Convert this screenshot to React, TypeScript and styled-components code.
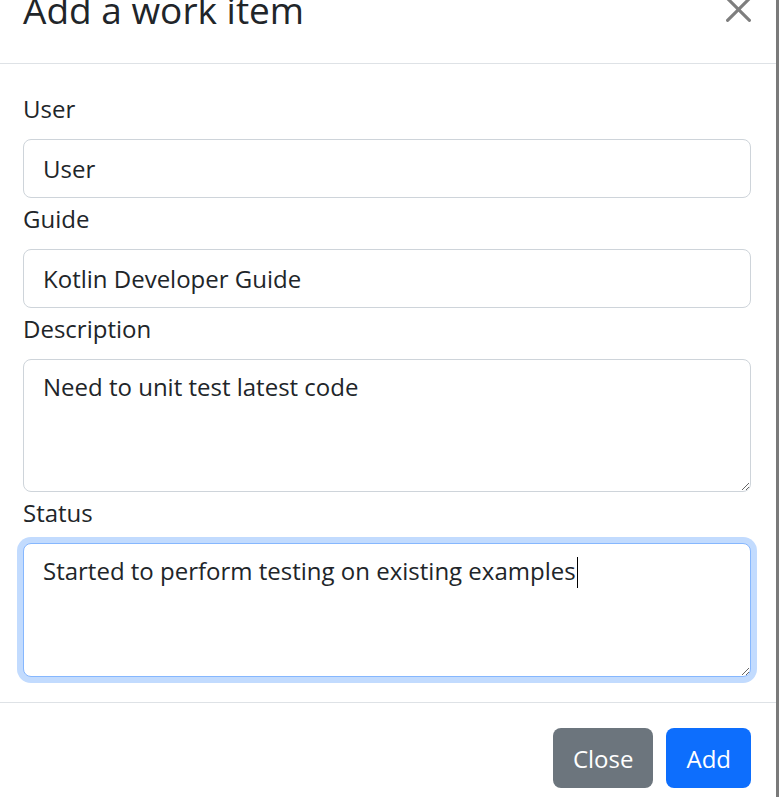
import styled, { createGlobalStyle } from 'styled-components';

const GlobalStyle = createGlobalStyle`
  html, body {
    margin: 0;
    height: 100%;
    overflow: hidden;
    background: #7a7a7a;
  }
  body {
    font-family: 'Open Sans', 'Noto Sans', sans-serif;
    color: #212529;
  }
`;

const CloseIcon = () => (
  <svg width="25" height="25" viewBox="0 0 16 16" aria-hidden="true">
    <path
      fill="currentColor"
      d="M.293.293a1 1 0 0 1 1.414 0L8 6.586 14.293.293a1 1 0 1 1 1.414 1.414L9.414 8l6.293 6.293a1 1 0 0 1-1.414 1.414L8 9.414l-6.293 6.293a1 1 0 0 1-1.414-1.414L6.586 8 .293 1.707a1 1 0 0 1 0-1.414z"
    />
  </svg>
);

export default function App() {
  return (
    <>
      <GlobalStyle />
      <Page>
        <Modal>
          <ModalHeader>
            <ModalTitle>Add a work item</ModalTitle>
            <CloseButton aria-label="Close">
              <CloseIcon />
            </CloseButton>
          </ModalHeader>

          <ModalBody>
            <FormGroup>
              <Label htmlFor="user">User</Label>
              <Input id="user" defaultValue="User" readOnly />
            </FormGroup>
            <FormGroup>
              <Label htmlFor="guide">Guide</Label>
              <Input id="guide" defaultValue="Kotlin Developer Guide" readOnly />
            </FormGroup>
            <FormGroup>
              <Label htmlFor="description">Description</Label>
              <TextArea id="description" defaultValue="Need to unit test latest code" readOnly />
            </FormGroup>
            <FormGroup $last>
              <Label htmlFor="status">Status</Label>
              <FocusedArea id="status" role="textbox">
                Started to perform testing on existing examples
                <Caret />
              </FocusedArea>
            </FormGroup>
          </ModalBody>

          <ModalFooter>
            <Button $variant="secondary">Close</Button>
            <Button $variant="primary">Add</Button>
          </ModalFooter>
        </Modal>
      </Page>
    </>
  );
}

const Page = styled.div`
  display: flex;
  align-items: flex-start;
`;

const Modal = styled.div`
  width: 776px;
  flex-shrink: 0;
  background: #fff;
`;

const ModalHeader = styled.div`
  display: flex;
  justify-content: space-between;
  align-items: flex-start;
  height: 64px;
  box-sizing: border-box;
  padding: 0 25px 0 23px;
  border-bottom: 1px solid #dee2e6;
`;

const ModalTitle = styled.h5`
  margin: -12px 0 0;
  font-size: 37px;
  line-height: 44px;
  font-weight: 500;
`;

const CloseButton = styled.button`
  margin-top: -3px;
  padding: 0;
  border: 0;
  background: transparent;
  color: #000;
  opacity: 0.5;
  line-height: 0;
  cursor: pointer;
`;

const ModalBody = styled.div`
  padding: 27px 25px 25px 23px;
`;

interface FormGroupProps {
  $last?: boolean;
}

const FormGroup = styled.div<FormGroupProps>`
  margin-bottom: ${(props) => (props.$last ? '0' : '3px')};
`;

const Label = styled.label`
  display: block;
  margin-bottom: 12px;
  font-size: 24px;
  line-height: 36px;
`;

const fieldBase = `
  display: block;
  width: 100%;
  box-sizing: border-box;
  font-family: 'Open Sans', 'Noto Sans', sans-serif;
  font-size: 24px;
  line-height: 36px;
  color: #212529;
  background: #fff;
  border: 1px solid #ced4da;
  border-radius: 8px;
  outline: none;
`;

const Input = styled.input`
  ${fieldBase}
  height: 59px;
  padding: 0 18px 0 19px;
`;

const TextArea = styled.textarea`
  ${fieldBase}
  height: 133px;
  padding: 9px 18px 9px 19px;
  resize: vertical;
`;

const FocusedArea = styled.div`
  ${fieldBase}
  height: 134px;
  padding: 9px 18px 9px 19px;
  resize: vertical;
  overflow: auto;
  border-color: #86b7fe;
  box-shadow: 0 0 0 6px #c2dbfe;
`;

const Caret = styled.span`
  display: inline-block;
  width: 1px;
  height: 31px;
  margin-left: 1px;
  background: #000;
  vertical-align: -8px;
`;

const ModalFooter = styled.div`
  display: flex;
  justify-content: flex-end;
  gap: 13px;
  padding: 25px 25px 24px;
  border-top: 1px solid #dee2e6;
`;

interface ButtonProps {
  $variant: 'primary' | 'secondary';
}

const Button = styled.button<ButtonProps>`
  height: 60px;
  padding: 0 20px;
  border: 0;
  border-radius: 8px;
  font-family: 'Open Sans', 'Noto Sans', sans-serif;
  font-size: 24px;
  color: #fff;
  background: ${(props) => (props.$variant === 'primary' ? '#0d6efd' : '#6c757d')};
  cursor: pointer;
`;
